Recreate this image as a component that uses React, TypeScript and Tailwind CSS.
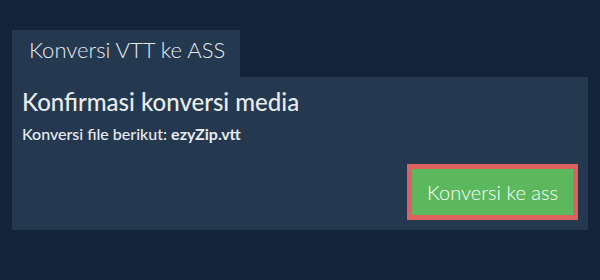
import React from "react";

const App: React.FC = () => {
  return (
    <div
      className="w-[600px] h-[280px] bg-[#12233a] px-[12px] pt-[30px] text-[#e8ebee]"
      style={{ fontFamily: "Lato, 'Open Sans', sans-serif" }}
    >
      {/* Tab */}
      <div className="w-[228px] h-[47px] bg-[#243850] pl-[17px] pt-[6px]">
        <span className="block text-[22px] leading-[28px] font-light">
          Konversi VTT ke ASS
        </span>
      </div>

      {/* Panel */}
      <div className="h-[153px] bg-[#243850] pt-[10px] pl-[10px] pr-[10px] flex flex-col">
        <h2 className="text-[24px] leading-[30px] font-medium">
          Konfirmasi konversi media
        </h2>
        <p className="mt-[7px] text-[16px] leading-[20px] font-medium">
          Konversi file berikut: <span className="font-bold">ezyZip.vtt</span>
        </p>
        <div className="mt-[20px] flex justify-end">
          <button className="h-[56px] w-[171px] border-[5px] border-[#dc625d] bg-[#5cb85c] text-white text-[20px] leading-[46px] font-light">
            Konversi ke ass
          </button>
        </div>
      </div>
    </div>
  );
};

export default App;
